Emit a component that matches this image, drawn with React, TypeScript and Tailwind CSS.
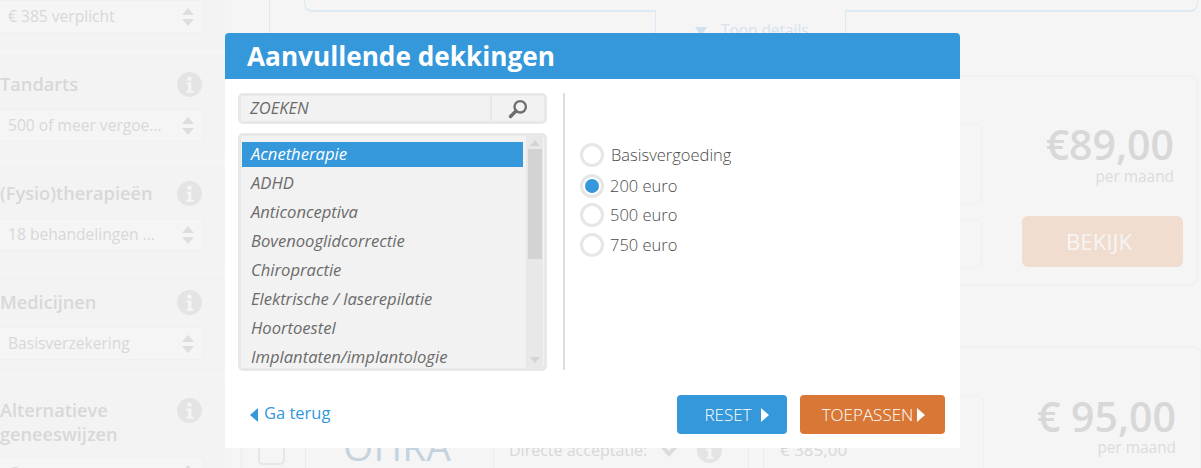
import React from "react";

function Info({ className = "" }: { className?: string }) {
  return (
    <svg viewBox="0 0 24 24" className={className}>
      <circle cx="12" cy="12" r="12" fill="#e4e4e4" />
      <circle cx="12" cy="6.5" r="2.2" fill="#f5f5f5" />
      <path d="M9 10h4.8v8H16v2H9v-2h1.8v-6H9z" fill="#f5f5f5" />
    </svg>
  );
}

function SelectBox({ value }: { value: string }) {
  return (
    <div className="-ml-[5px] flex h-[33px] w-[209px] items-center justify-between rounded-[3px] border border-[#f0f0f0] bg-[#f5f5f5] pl-[12px] pr-[9px]">
      <span className="text-[15.6px] leading-none text-[#d8d8d8]">{value}</span>
      <svg viewBox="0 0 12 18" className="h-[18px] w-[12px]">
        <path d="M6 0l6 7H0zM0 11h12l-6 7z" fill="#dedede" />
      </svg>
    </div>
  );
}

function Section({ title, value, cls, selCls = "mt-[12px]" }: { title: React.ReactNode; value: string; cls: string; selCls?: string }) {
  return (
    <div className={`shrink-0 bg-[#f3f3f3] pr-[21px] ${cls}`}>
      <div className="flex items-start justify-between">
        <div className="text-[18.2px] font-semibold leading-[24px] text-[#d8d8d8]">{title}</div>
        <Info className="mr-[2px] h-[25px] w-[25px] shrink-0" />
      </div>
      <div className={selCls}>
        <SelectBox value={value} />
      </div>
    </div>
  );
}

function Radio({ label, checked, gap }: { label: string; checked?: boolean; gap: string }) {
  return (
    <div className="flex h-[24px] items-center">
      <div className="flex h-[24px] w-[24px] items-center justify-center rounded-full border-[3px] border-[#e6e6e6] bg-white">
        {checked && <div className="h-[14px] w-[14px] rounded-full bg-[#3498db]" />}
      </div>
      <span className={`text-[16.5px] font-light text-[#4a4a4a] ${gap}`}>{label}</span>
    </div>
  );
}

const items = [
  "ADHD",
  "Anticonceptiva",
  "Bovenooglidcorrectie",
  "Chiropractie",
  "Elektrische / laserepilatie",
  "Hoortoestel",
  "Implantaten/implantologie",
];

export default function App() {
  return (
    <div className="relative flex h-[468px] w-[1201px] overflow-hidden bg-[#f5f5f5] font-['Open_Sans',sans-serif]">
      {/* sidebar behind the dialog */}
      <div className="flex w-[225px] shrink-0 flex-col">
        <div className="h-[50px] shrink-0 bg-[#f3f3f3]">
          <SelectBox value="€ 385 verplicht" />
        </div>
        <Section title="Tandarts" value="500 of meer vergoe..." cls="h-[105px] mt-[4px] pt-[18px]" />
        <Section title="(Fysio)therapieën" value="18 behandelingen ..." cls="h-[108px] mt-[4px] pt-[18px]" />
        <Section title="Medicijnen" value="Basisverzekering" cls="h-[100px] mt-[3px] pt-[16px]" />
        <Section
          title={
            <>
              Alternatieve
              <br />
              geneeswijzen
            </>
          }
          value="Geen"
          cls="h-[120px] mt-[3px] pt-[21px]"
          selCls="mt-[11px]"
        />
      </div>

      {/* main column behind the dialog */}
      <div className="flex flex-1 flex-col">
        <div className="flex h-[33px] shrink-0 pl-[44px]">
          <div className="w-[35px] border-l border-[#e4e8ec]" />
          <div className="flex w-[352px] flex-col">
            <div className="h-[12px] rounded-bl-lg border-b-2 border-l border-[#dce9f3]" />
            <div className="ml-auto w-px flex-1 bg-[#dce9f3]" />
          </div>
          <div className="flex w-[189px] items-start pl-[39px] pt-[20px]">
            <svg viewBox="0 0 12 9" className="mt-[7px] h-[9px] w-[12px] shrink-0">
              <path d="M0 0h12L6 9z" fill="#cfe0ee" />
            </svg>
            <span className="ml-[14px] whitespace-nowrap text-[15.4px] leading-[22px] text-[#d4e3ef]">Toon details</span>
          </div>
          <div className="flex w-[353px] flex-col">
            <div className="h-[12px] rounded-br-lg border-r border-b-2 border-[#dce9f3]" />
            <div className="w-px flex-1 bg-[#dce9f3]" />
          </div>
        </div>

        <div className="mt-[42px] ml-[15px] flex h-[211px] w-[958px] shrink-0 rounded-lg border-2 border-[#f1f1f1]">
          <div className="flex w-[740px] shrink-0 flex-col gap-[15px] pt-[46px]">
            <div className="h-[81px] rounded-md border border-[#f0f0f0]" />
            <div className="h-[49px] rounded-md border border-[#f0f0f0]" />
          </div>
          <div className="flex flex-1 flex-col items-stretch pl-[40px] pr-[13px]">
            <div className="mt-[43px] pr-[9px] text-right text-[41px] font-semibold leading-[48px] text-[#d8d8d8]">€89,00</div>
            <div className="pr-[9px] text-right text-[15.4px] font-normal leading-[18px] text-[#dcdcdc]">per maand</div>
            <div className="mt-[30px] flex h-[51px] items-center justify-center rounded-md bg-[#f0ddd0] pr-[7px] text-[22.2px] text-[#f7f5f3]">BEKIJK</div>
          </div>
        </div>

        <div className="mt-[60px] ml-[15px] flex h-[140px] w-[962px] shrink-0 rounded-lg border-2 border-[#f1f1f1]">
          <div className="w-[742px] shrink-0 pt-[47px]">
            <div className="flex h-[90px] rounded-md border border-[#f0f0f0] pt-[42px] text-[#d8d8d8]">
              <div className="ml-[15px] h-[27px] w-[27px] shrink-0 rounded-[5px] border-2 border-[#e6e6e6]" />
              <div className="ml-[20px] h-full w-px shrink-0 bg-[#ececec]" />
              <div className="-mt-[6px] ml-[37px] w-[108px] shrink-0 text-center text-[39px] font-normal leading-[27px] text-[#c5d3df]">OHRA</div>
              <div className="ml-[42px] h-full w-px shrink-0 bg-[#ececec]" />
              <div className="ml-[15px] w-[137px] shrink-0 whitespace-nowrap text-[16px] leading-[24px]">Directe acceptatie:</div>
              <svg viewBox="0 0 20 16" className="ml-[13px] mt-[4px] h-[16px] w-[20px] shrink-0">
                <path d="M2 3l8 9 8-9" fill="none" stroke="#dcdcdc" strokeWidth="4" />
              </svg>
              <Info className="ml-[18px] h-[25px] w-[25px] shrink-0" />
              <div className="ml-[26px] h-full w-px shrink-0 bg-[#ececec]" />
              <div className="ml-[14px] h-full w-px shrink-0 bg-[#ececec]" />
              <div className="ml-[16px] whitespace-nowrap text-[17px] leading-[24px]">€ 385,00</div>
            </div>
          </div>
          <div className="flex-1 pr-[24px] pt-[44px] text-right">
            <div className="text-[41px] font-semibold leading-[48px] text-[#d8d8d8]">€ 95,00</div>
            <div className="-mt-px text-[15.4px] leading-[18px] text-[#dcdcdc]">per maand</div>
          </div>
        </div>
      </div>

      {/* dialog */}
      <div className="absolute left-[225px] top-[33px] flex h-[415px] w-[735px] flex-col overflow-hidden rounded-t-[4px] bg-white">
        <div className="flex h-[46px] shrink-0 items-center bg-[#3498db] pl-[22px]">
          <h1 className="text-[26.2px] font-bold leading-none text-white">Aanvullende dekkingen</h1>
        </div>
        <div className="flex pl-[13px] pt-[14px]">
          <div className="w-[309px] shrink-0">
            <div className="flex h-[31px] rounded-[5px] border-[3px] border-[#e8e8e8] bg-[#f2f2f2]">
              <div className="flex flex-1 items-center border-r-2 border-[#e8e8e8] pl-[9px] text-[16.5px] italic text-[#6b6b6b]">ZOEKEN</div>
              <div className="flex w-[52px] items-center justify-center">
                <svg viewBox="0 0 20 20" className="h-[20px] w-[20px]">
                  <circle cx="12.2" cy="7.8" r="5.7" fill="none" stroke="#6e6e6e" strokeWidth="2.4" />
                  <path d="M8 12L2.5 17.5" fill="none" stroke="#6e6e6e" strokeWidth="3.4" strokeLinecap="round" />
                </svg>
              </div>
            </div>
            <div className="mt-[9px] flex h-[238px] overflow-hidden rounded-[5px] border-[3px] border-[#e8e8e8] bg-[#f2f2f2]">
              <div className="w-[282px] shrink-0 overflow-hidden pl-px pt-[6px]">
                <div className="flex h-[25px] items-center bg-[#3498db] pl-[9px] text-[16.6px] italic text-white">Acnetherapie</div>
                {items.map((t) => (
                  <div key={t} className="mt-[4px] flex h-[25px] items-center pl-[9px] text-[16.6px] italic text-[#6b6b6b]">
                    {t}
                  </div>
                ))}
              </div>
              <div className="ml-[3px] flex w-[17px] flex-col items-center bg-[#e8e8e8]">
                <svg viewBox="0 0 10 6" className="mt-[4px] h-[6px] w-[10px] shrink-0">
                  <path d="M5 0l5 6H0z" fill="#d4d4d4" />
                </svg>
                <div className="mt-[3px] h-[110px] w-[14px] bg-[#d3d3d3]" />
                <div className="flex-1" />
                <svg viewBox="0 0 10 6" className="mb-[5px] h-[6px] w-[10px] shrink-0">
                  <path d="M0 0h10L5 6z" fill="#d4d4d4" />
                </svg>
              </div>
            </div>
          </div>
          <div className="ml-[16px] h-[277px] w-[2px] shrink-0 bg-[#dcdcdc]" />
          <div className="ml-[15px] flex flex-col pt-[50px]">
            <Radio label="Basisvergoeding" gap="ml-[7px]" />
            <div className="mt-[7px]">
              <Radio label="200 euro" checked gap="ml-[6px]" />
            </div>
            <div className="mt-[5px]">
              <Radio label="500 euro" gap="ml-[6px]" />
            </div>
            <div className="mt-[6px]">
              <Radio label="750 euro" gap="ml-[6px]" />
            </div>
          </div>
        </div>
        <div className="mt-[24px] flex items-center pl-[25px] pr-[15px]">
          <svg viewBox="0 0 8 14" className="h-[14px] w-[8px]">
            <path d="M8 0v14L0 7z" fill="#3498db" />
          </svg>
          <span className="mb-[2px] ml-[6px] text-[16.5px] text-[#3498db]">Ga terug</span>
          <div className="ml-auto flex gap-[13px]">
            <button className="flex h-[39px] w-[110px] items-center justify-center gap-[9px] rounded-[4px] bg-[#3498db] pl-[9px] text-[17px] font-light text-white">
              RESET
              <svg viewBox="0 0 8 14" className="h-[14px] w-[8px]">
                <path d="M0 0v14l8-7z" fill="#fff" />
              </svg>
            </button>
            <button className="flex h-[39px] w-[145px] items-center justify-center gap-[4px] rounded-[4px] bg-[#d97736] pl-[2px] text-[17px] font-light text-white">
              TOEPASSEN
              <svg viewBox="0 0 8 14" className="h-[14px] w-[8px]">
                <path d="M0 0v14l8-7z" fill="#fff" />
              </svg>
            </button>
          </div>
        </div>
      </div>
    </div>
  );
}
